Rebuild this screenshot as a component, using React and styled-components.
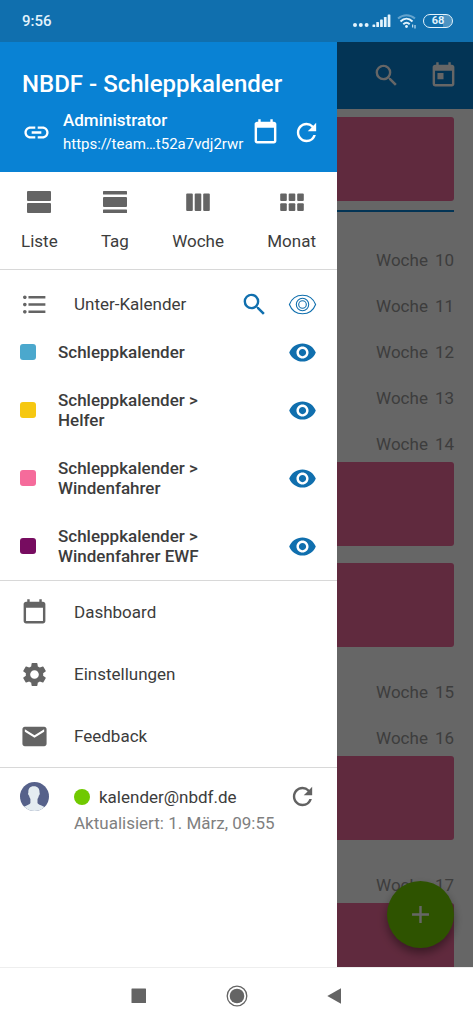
import React, { useState } from 'react'
import styled, { createGlobalStyle } from 'styled-components'
import {
  MdSearch,
  MdToday,
  MdLink,
  MdRefresh,
  MdSettings,
  MdEmail,
  MdFormatListBulleted,
  MdVisibility,
  MdAdd,
} from 'react-icons/md'

const agenda = [
  { type: 'event', id: 'e1' },
  { type: 'today', id: 't1' },
  { type: 'week', id: 'w10', number: 10 },
  { type: 'week', id: 'w11', number: 11 },
  { type: 'week', id: 'w12', number: 12 },
  { type: 'week', id: 'w13', number: 13 },
  { type: 'week', id: 'w14', number: 14 },
  { type: 'event', id: 'e2' },
  { type: 'event', id: 'e3' },
  { type: 'week', id: 'w15', number: 15 },
  { type: 'week', id: 'w16', number: 16 },
  { type: 'event', id: 'e4' },
  { type: 'week', id: 'w17', number: 17 },
  { type: 'event', id: 'e5' },
]

const subCalendars = [
  { id: 1, color: '#4ba8cd', name: 'Schleppkalender' },
  { id: 2, color: '#f6c811', name: 'Schleppkalender >', child: 'Helfer' },
  { id: 3, color: '#f56b9b', name: 'Schleppkalender >', child: 'Windenfahrer' },
  { id: 4, color: '#770c60', name: 'Schleppkalender >', child: 'Windenfahrer EWF' },
]

const CalendarIcon = ({ size }) => (
  <svg width={size} height={size} viewBox='0 0 24 24' fill='currentColor'>
    <path d='M19 3h-1V1h-2v2H8V1H6v2H5c-1.1 0-2 .9-2 2v14c0 1.1.9 2 2 2h14c1.1 0 2-.9 2-2V5c0-1.1-.9-2-2-2zm0 16H5V8h14v11z' />
  </svg>
)

const ListViewIcon = () => (
  <svg width='24' height='24' viewBox='0 0 24 24' fill='currentColor'>
    <rect x='0' y='1' width='24' height='10' rx='1' />
    <rect x='0' y='13' width='24' height='10' rx='1' />
  </svg>
)

const DayViewIcon = () => (
  <svg width='24' height='24' viewBox='0 0 24 24' fill='currentColor'>
    <rect x='0' y='1' width='24' height='3.5' rx='.6' />
    <rect x='0' y='7' width='24' height='10' rx='1' />
    <rect x='0' y='19.5' width='24' height='3.5' rx='.6' />
  </svg>
)

const WeekViewIcon = () => (
  <svg width='24' height='24' viewBox='0 0 24 24' fill='currentColor'>
    <rect x='0.2' y='3.5' width='6.6' height='17.5' rx='1' />
    <rect x='8.7' y='3.5' width='6.6' height='17.5' rx='1' />
    <rect x='17.2' y='3.5' width='6.6' height='17.5' rx='1' />
  </svg>
)

const MonthViewIcon = () => (
  <svg width='24' height='24' viewBox='0 0 24 24' fill='currentColor'>
    {[0.2, 8.7, 17.2].map((x) => (
      <g key={x}>
        <rect x={x} y='3.5' width='6.6' height='7.6' rx='1' />
        <rect x={x} y='13.3' width='6.6' height='7.6' rx='1' />
      </g>
    ))}
  </svg>
)

const EyeOutlineIcon = () => (
  <svg width='29' height='29' viewBox='0 0 29 29' fill='none' stroke='currentColor' strokeWidth='1.1'>
    <path d='M1.4 14.5C3.6 8.7 8.6 5.2 14.5 5.2s10.9 3.5 13.1 9.3c-2.2 5.800-7.2 9.300-13.100 9.300S3.600 20.300 1.400 14.500z' />
    <circle cx='14.5' cy='14.5' r='6.2' />
    <circle cx='14.5' cy='14.5' r='3.8' />
  </svg>
)

const AvatarIcon = () => (
  <svg width='29' height='29' viewBox='0 0 29 29'>
    <clipPath id='avatarClip'>
      <circle cx='14.5' cy='14.5' r='14.5' />
    </clipPath>
    <g clipPath='url(#avatarClip)'>
      <rect width='29' height='29' fill='#56618a' />
      <path
        fill='#e4ecf1'
        d='M13.800 4.300c4 0 5.900 2.400 5.700 6.200.5.400.3 2.500-.6 3.100-.3 1.500-.8 2.500-1.400 3.300v4c.5 1.500 4 2.300 6.500 3.800V29H4v-4.300c3-1.700 6-2.300 6.400-3.800v-4c-.7-.9-1.200-2-1.400-3.300-.9-.6-1.200-2.700-.6-3.100-.4-3.600 1.400-6.200 5.400-6.200z'
      />
    </g>
  </svg>
)

const SignalIcon = () => (
  <svg width='38' height='16' viewBox='0 0 38 16' fill='currentColor'>
    <circle cx='2' cy='12' r='2' />
    <circle cx='7.8' cy='12' r='2' />
    <circle cx='13.6' cy='12' r='2' />
    <rect x='19.5' y='11.5' width='2.7' height='2.500' rx='.6' />
    <rect x='23.3' y='9' width='2.7' height='5' rx='.6' />
    <rect x='27.1' y='6.500' width='2.7' height='7.500' rx='.6' />
    <rect x='30.9' y='4' width='2.7' height='10' rx='.6' />
    <rect x='34.7' y='1.500' width='2.7' height='12.500' rx='.6' />
  </svg>
)

const WifiIcon = () => (
  <svg width='20' height='16' viewBox='0 0 20 16' fill='none' stroke='currentColor' strokeWidth='2'>
    <path d='M1 5.600C6 1.200 13 1.200 18 5.600' opacity='.4' />
    <path d='M3.500 8.400c3.600-3.400 8.400-3.400 12 0' />
    <path d='M6.300 11.200c2-1.900 4.400-1.900 6.400 0' />
    <circle cx='9.500' cy='13.500' r='1.400' fill='currentColor' stroke='none' />
    <path d='M15.700 11.500v3M18 12v3.500' strokeWidth='1' />
  </svg>
)

const App = () => {
  const [hidden, setHidden] = useState([])

  const toggleCalendar = (id) => {
    setHidden(hidden.includes(id) ? hidden.filter((h) => h !== id) : [...hidden, id])
  }

  return (
    <Screen>
      <GlobalStyle />
      <StatusBar>
        <Clock>9:56</Clock>
        <StatusIcons>
          <SignalIcon />
          <WifiIcon />
          <Battery>68</Battery>
        </StatusIcons>
      </StatusBar>

      <Content>
        <AppBar>
          <IconButton aria-label='Suche'>
            <MdSearch size={29} />
          </IconButton>
          <IconButton aria-label='Heute'>
            <MdToday size={29} />
          </IconButton>
        </AppBar>
        <Agenda>
          {agenda.map((item) => {
            if (item.type === 'week') {
              return (
                <WeekLabel key={item.id}>
                  <span>Woche</span>
                  <span>{item.number}</span>
                </WeekLabel>
              )
            }
            return item.type === 'event' ? <EventCard key={item.id} /> : <TodayLine key={item.id} />
          })}
        </Agenda>
        <AddButton aria-label='Neuer Termin'>
          <MdAdd size={29} />
        </AddButton>
        <Scrim />

        <Drawer>
          <DrawerHeader>
            <Title>NBDF - Schleppkalender</Title>
            <LinkRow>
              <MdLink size={29} />
              <LinkText>
                <Role>Administrator</Role>
                <Url>https://team…t52a7vdj2rwr</Url>
              </LinkText>
              <IconButton aria-label='Kalender'>
                <CalendarIcon size={29} />
              </IconButton>
              <IconButton aria-label='Aktualisieren'>
                <MdRefresh size={29} />
              </IconButton>
            </LinkRow>
          </DrawerHeader>

          <Views>
            <ViewButton>
              <ListViewIcon />
              Liste
            </ViewButton>
            <ViewButton>
              <DayViewIcon />
              Tag
            </ViewButton>
            <ViewButton>
              <WeekViewIcon />
              Woche
            </ViewButton>
            <ViewButton>
              <MonthViewIcon />
              Monat
            </ViewButton>
          </Views>

          <SubCalendars>
            <SubHeader>
              <MdFormatListBulleted size={29} />
              <SubTitle>Unter-Kalender</SubTitle>
              <IconButton $color='#106fae' aria-label='Unter-Kalender suchen'>
                <MdSearch size={29} />
              </IconButton>
              <IconButton $color='#106fae' aria-label='Alle anzeigen'>
                <EyeOutlineIcon />
              </IconButton>
            </SubHeader>
            {subCalendars.map((cal) => (
              <CalendarRow key={cal.id}>
                <Swatch $color={cal.color} />
                <CalendarName>
                  <div>{cal.name}</div>
                  {cal.child && <div>{cal.child}</div>}
                </CalendarName>
                <IconButton
                  $color={hidden.includes(cal.id) ? '#bbb' : '#106fae'}
                  aria-label='Anzeigen'
                  onClick={() => toggleCalendar(cal.id)}
                >
                  <MdVisibility size={29} />
                </IconButton>
              </CalendarRow>
            ))}
          </SubCalendars>

          <Menu>
            <MenuItem>
              <CalendarIcon size={29} />
              <MenuLabel>Dashboard</MenuLabel>
            </MenuItem>
            <MenuItem>
              <MdSettings size={29} />
              <MenuLabel>Einstellungen</MenuLabel>
            </MenuItem>
            <MenuItem>
              <MdEmail size={29} />
              <MenuLabel>Feedback</MenuLabel>
            </MenuItem>
          </Menu>

          <Account>
            <AvatarIcon />
            <AccountText>
              <Email>
                <OnlineDot />
                kalender@nbdf.de
              </Email>
              <Updated>Aktualisiert: 1. März, 09:55</Updated>
            </AccountText>
            <IconButton $color='#626262' aria-label='Konto aktualisieren'>
              <MdRefresh size={29} />
            </IconButton>
          </Account>
        </Drawer>
      </Content>

      <NavBar>
        <IconButton $color='#646464' aria-label='Übersicht'>
          <svg width='22' height='22' viewBox='0 0 22 22' fill='currentColor'>
            <rect x='3.5' y='3.5' width='14.5' height='14.5' rx='.5' />
          </svg>
        </IconButton>
        <IconButton $color='#646464' aria-label='Start'>
          <svg width='22' height='22' viewBox='0 0 22 22' fill='currentColor'>
            <circle cx='11' cy='11' r='9.8' fill='none' stroke='currentColor' strokeWidth='1.3' />
            <circle cx='11' cy='11' r='7.3' />
          </svg>
        </IconButton>
        <IconButton $color='#646464' aria-label='Zurück'>
          <svg width='22' height='22' viewBox='0 0 22 22' fill='currentColor'>
            <path d='M17 3.2v15.600L3.300 11z' />
          </svg>
        </IconButton>
      </NavBar>
    </Screen>
  )
}

export default App

const GlobalStyle = createGlobalStyle`
  * {
    box-sizing: border-box;
  }
  body {
    margin: 0;
    font-family: Roboto, 'Liberation Sans', sans-serif;
    font-size: 17px;
    line-height: 20px;
    color: #3c3c3c;
    background: #fff;
  }
  svg {
    display: block;
    flex-shrink: 0;
  }
`

const Screen = styled.div`
  display: flex;
  flex-direction: column;
  height: 100vh;
  overflow: hidden;
`
const StatusBar = styled.div`
  display: flex;
  align-items: center;
  justify-content: space-between;
  height: 42px;
  padding: 0 20px 0 22px;
  background: #106fae;
  color: #e3f3fc;
`
const Clock = styled.div`
  font-size: 15px;
  font-weight: 500;
`
const StatusIcons = styled.div`
  display: flex;
  align-items: center;
  gap: 6px;
`
const Battery = styled.div`
  width: 30px;
  height: 14px;
  border: 1px solid #e3f3fc;
  border-radius: 7px;
  background: linear-gradient(90deg, transparent 68%, rgba(255, 255, 255, 0.25) 68%);
  font-size: 11px;
  font-weight: 700;
  line-height: 12px;
  text-align: center;
`
const IconButton = styled.button`
  display: flex;
  flex-shrink: 0;
  padding: 0;
  border: none;
  background: none;
  color: ${({ $color }) => $color || '#fff'};
  cursor: pointer;
`

const Content = styled.div`
  position: relative;
  flex: 1;
  min-height: 0;
  overflow: hidden;
`
const AppBar = styled.div`
  display: flex;
  align-items: center;
  justify-content: flex-end;
  gap: 28px;
  height: 67px;
  padding: 0 15px;
  background: #0982d4;
`
const Agenda = styled.div`
  display: flex;
  flex-direction: column;
  padding-right: 19px;
`
const EventCard = styled.div`
  height: 84px;
  margin: 8px 0 9px;
  border-radius: 3px;
  background: #f16a9b;
`
const TodayLine = styled.div`
  height: 2px;
  margin-bottom: 12px;
  background: #0982d4;
`
const WeekLabel = styled.div`
  display: flex;
  justify-content: flex-end;
  gap: 7px;
  padding-top: 26px;
  color: #999;
`
const AddButton = styled.button`
  position: absolute;
  right: 19px;
  bottom: 19px;
  display: flex;
  align-items: center;
  justify-content: center;
  width: 67px;
  height: 67px;
  padding: 0;
  border: none;
  border-radius: 50%;
  background: #73d000;
  color: #fff;
  box-shadow: 0 5px 10px rgba(0, 0, 0, 0.4);
`
const Scrim = styled.div`
  position: absolute;
  inset: 0;
  background: rgba(0, 0, 0, 0.6);
`

const Drawer = styled.nav`
  position: absolute;
  top: 0;
  bottom: 0;
  left: 0;
  width: calc(100% - 136px);
  max-width: 400px;
  background: #fff;
`
const DrawerHeader = styled.div`
  padding: 28px 16px 15px 22px;
  background: #0982d4;
  color: #fff;
`
const Title = styled.div`
  font-size: 24px;
  font-weight: 500;
  line-height: 28px;
`
const LinkRow = styled.div`
  display: flex;
  align-items: center;
  gap: 12px;
  margin-top: 10px;
`
const LinkText = styled.div`
  flex: 1;
  min-width: 0;
  white-space: nowrap;
`
const Role = styled.div`
  font-weight: 500;
  line-height: 24px;
`
const Url = styled.div`
  font-size: 15px;
  line-height: 25px;
`
const Views = styled.div`
  display: flex;
  justify-content: space-between;
  padding: 18px 21px;
  border-bottom: 1px solid #d8d8d8;
`
const ViewButton = styled.button`
  display: flex;
  flex-direction: column;
  align-items: center;
  gap: 17px;
  padding: 0;
  border: none;
  background: none;
  font: inherit;
  color: #3c3c3c;
  cursor: pointer;

  svg {
    color: #646464;
  }
`
const SubCalendars = styled.div`
  padding-top: 10px;
  border-bottom: 1px solid #d8d8d8;
`
const SubHeader = styled.div`
  display: flex;
  align-items: center;
  gap: 19px;
  height: 48px;
  padding: 0 20px;
  color: #646464;
`
const SubTitle = styled.div`
  flex: 1;
  padding-left: 6px;
  color: #3c3c3c;
`
const CalendarRow = styled.div`
  display: flex;
  align-items: center;
  gap: 22px;
  padding: 14px 20px;

  button {
    margin: -5px 0;
  }
`
const Swatch = styled.div`
  width: 16px;
  height: 16px;
  border-radius: 3px;
  background: ${({ $color }) => $color};
`
const CalendarName = styled.div`
  flex: 1;
  font-weight: 500;
`
const Menu = styled.div`
  border-bottom: 1px solid #d8d8d8;
`
const MenuItem = styled.button`
  display: flex;
  align-items: center;
  gap: 25px;
  width: 100%;
  height: 62px;
  padding: 0 20px;
  border: none;
  background: none;
  font: inherit;
  text-align: left;
  color: #646464;
  cursor: pointer;
`
const MenuLabel = styled.span`
  color: #3c3c3c;
`
const Account = styled.div`
  display: flex;
  align-items: flex-start;
  gap: 25px;
  padding: 14px 20px;
`
const AccountText = styled.div`
  flex: 1;
  min-width: 0;
  white-space: nowrap;
`
const Email = styled.div`
  display: flex;
  align-items: center;
  gap: 9px;
  height: 29px;
`
const OnlineDot = styled.span`
  width: 16px;
  height: 16px;
  border-radius: 50%;
  background: #70c900;
`
const Updated = styled.div`
  line-height: 24px;
  color: #808080;
`
const NavBar = styled.div`
  display: flex;
  align-items: center;
  justify-content: center;
  gap: 76px;
  height: 57px;
  border-top: 1px solid #eee;
  background: #fff;
`
